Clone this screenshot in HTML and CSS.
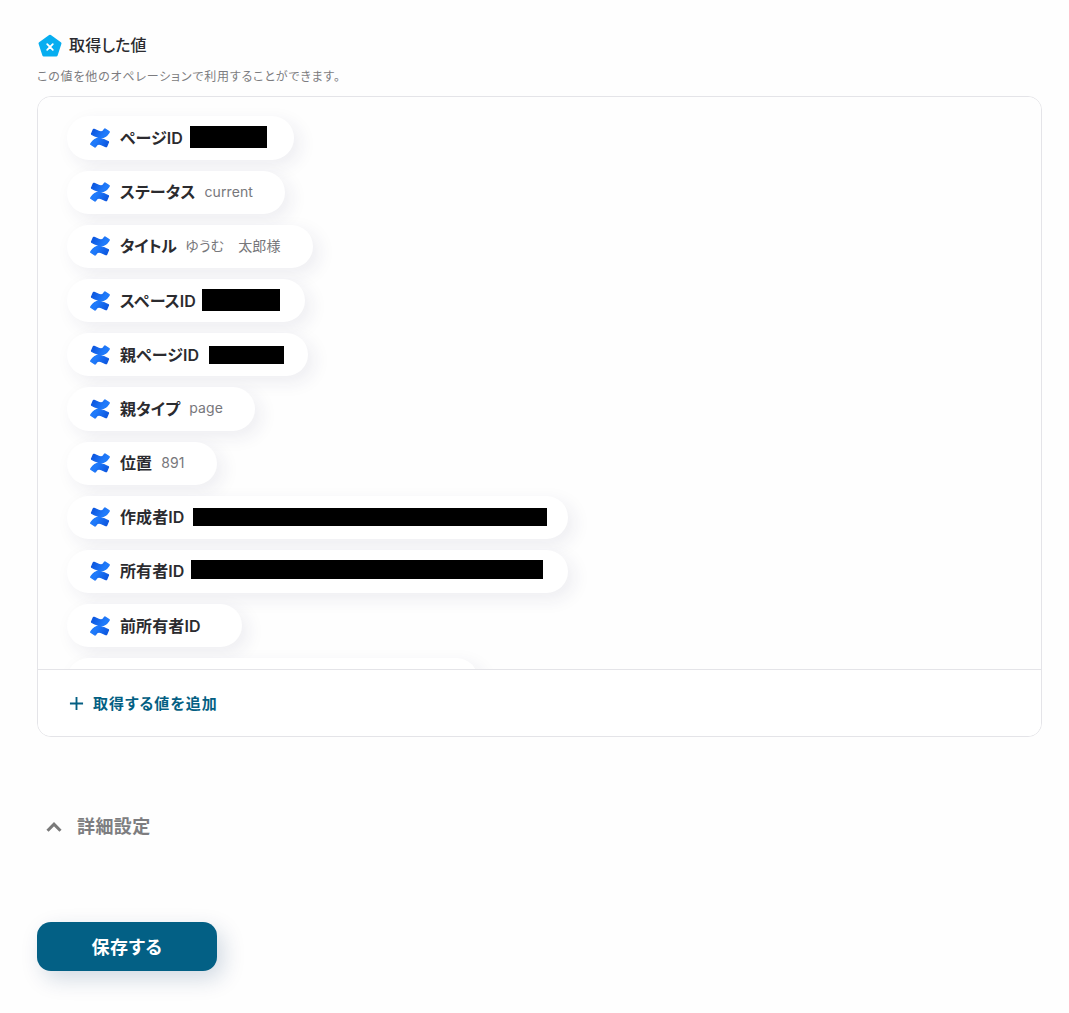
FILE: index.html
```html
<!DOCTYPE html>
<html lang="ja">
<head>
<meta charset="utf-8">
<title>取得した値</title>
<link rel="stylesheet" href="styles.css">
</head>
<body>
<svg class="defs" width="0" height="0" aria-hidden="true">
  <defs>
    <linearGradient id="cg1" gradientUnits="userSpaceOnUse" x1="22" y1="24" x2="8" y2="15"><stop offset="0" stop-color="#0a52dc"/><stop offset="1" stop-color="#1f7afa"/></linearGradient>
    <linearGradient id="cg2" gradientUnits="userSpaceOnUse" x1="2" y1="0" x2="16" y2="9"><stop offset="0" stop-color="#0a52dc"/><stop offset="1" stop-color="#1f7afa"/></linearGradient>
    <symbol id="conf" viewBox="-1 -1 26 26">
      <path fill="url(#cg1)" stroke="url(#cg1)" stroke-width="1.600" d="M.87 18.257c-.248.382-.53.875-.763 1.245a.764.764 0 0 0 .255 1.04l4.965 3.054a.764.764 0 0 0 1.058-.26c.199-.332.454-.763.733-1.221 1.967-3.247 3.945-2.853 7.508-1.146l4.957 2.337a.764.764 0 0 0 1.028-.382l2.364-5.346a.764.764 0 0 0-.382-1 599.851 599.851 0 0 1-4.965-2.361C10.911 10.97 5.6 11.093.87 18.257z"/>
      <path fill="url(#cg2)" stroke="url(#cg2)" stroke-width="1.600" d="M23.131 5.743c.248-.382.53-.875.763-1.245a.764.764 0 0 0-.255-1.04L18.674.404a.764.764 0 0 0-1.058.26c-.199.332-.454.763-.733 1.221-1.967 3.247-3.945 2.853-7.508 1.146L4.418.694a.764.764 0 0 0-1.028.382L1.026 6.422a.764.764 0 0 0 .382 1c1.05.5 3.156 1.49 4.965 2.361 6.712 3.247 12.023 3.124 16.758-4.04z"/>
    </symbol>
  </defs>
</svg>
<main class="page">
  <header class="head">
    <svg class="badge" viewBox="0 0 24 24" aria-hidden="true">
      <path fill="#07aef0" stroke="#07aef0" stroke-width="3" stroke-linejoin="round" d="M12 2.200 22 9.400 18.200 21H5.800L2 9.400z"/>
      <path fill="none" stroke="#fff" stroke-width="1.800" stroke-linecap="round" d="M9.200 10.200 14.800 15.800M14.800 10.200 9.200 15.800"/>
    </svg>
    <h2 class="title">取得した値</h2>
  </header>
  <p class="sub">この値を他のオペレーションで利用することができます。</p>

  <section class="card">
    <div class="list">
      <div class="pill"><svg class="ic"><use href="#conf"/></svg><span class="label">ページID</span><span class="redact r1"></span></div>
      <div class="pill"><svg class="ic"><use href="#conf"/></svg><span class="label">ステータス</span><span class="val">current</span></div>
      <div class="pill"><svg class="ic"><use href="#conf"/></svg><span class="label tight">タイトル</span><span class="val">ゆうむ　太郎様</span></div>
      <div class="pill"><svg class="ic"><use href="#conf"/></svg><span class="label">スペースID</span><span class="redact r2"></span></div>
      <div class="pill"><svg class="ic"><use href="#conf"/></svg><span class="label">親ページID</span><span class="redact r3"></span></div>
      <div class="pill"><svg class="ic"><use href="#conf"/></svg><span class="label">親タイプ</span><span class="val">page</span></div>
      <div class="pill"><svg class="ic"><use href="#conf"/></svg><span class="label">位置</span><span class="val">891</span></div>
      <div class="pill"><svg class="ic"><use href="#conf"/></svg><span class="label">作成者ID</span><span class="redact r4"></span></div>
      <div class="pill"><svg class="ic"><use href="#conf"/></svg><span class="label">所有者ID</span><span class="redact r5"></span></div>
      <div class="pill"><svg class="ic"><use href="#conf"/></svg><span class="label">前所有者ID</span><span class="val"></span></div>
      <div class="pill pill-last"></div>
    </div>
    <div class="foot">
      <svg class="plus" viewBox="0 0 16 16" aria-hidden="true"><path d="M8 1v14M1 8h14" stroke="#045f83" stroke-width="2" fill="none"/></svg>
      <span class="add">取得する値を追加</span>
    </div>
  </section>

  <div class="detail">
    <svg class="chev" viewBox="0 0 16 10" aria-hidden="true"><path d="M1.500 8.800 8 2.200l6.500 6.600" fill="none" stroke="#7a7a7a" stroke-width="3"/></svg>
    <span class="detail-text">詳細設定</span>
  </div>

  <button class="save" type="button">保存する</button>
</main>
</body>
</html>
```

FILE: styles.css
```css
* { box-sizing: border-box; }
html, body { margin: 0; height: 1013px; overflow: hidden; }
body {
  background: #fefefe;
  color: #2b2b2f;
  font-family: Inter, "Noto Sans CJK JP", "Noto Sans", sans-serif;
  font-feature-settings: "palt";
}
.defs { position: absolute; }
.page { padding: 34px 27px 0 37px; }
.head { display: flex; align-items: center; gap: 7px; height: 24px; margin-left: 1px; }
.badge { width: 24px; height: 24px; }
.title { margin: 0; padding-bottom: 2px; font-size: 16px; font-weight: 500; letter-spacing: 0.2px; line-height: 24px; }
.sub { margin: 11px 0 0; font-size: 12px; line-height: 16px; letter-spacing: 0.82px; color: #7c7c80; }
.card {
  margin-top: 11px;
  height: 641px;
  background: #fff;
  border: 1px solid #e4e4e8;
  border-radius: 14px;
  overflow: hidden;
  display: flex;
  flex-direction: column;
}
.list {
  height: 572px;
  overflow: hidden;
  padding: 19.4px 0 0 29px;
  display: flex;
  flex-direction: column;
  align-items: flex-start;
  gap: 11px;
  background: #fefefe;
}
.pill {
  flex: none;
  height: 43.2px;
  display: flex;
  align-items: center;
  padding: 0 32px 0 23px;
  background: #fff;
  border-radius: 22px;
  box-shadow: 6px 6px 18px rgba(40, 40, 90, 0.08);
}
.pill-last { width: 411px; }
.ic { width: 20px; height: 20px; flex: none; margin-right: 10px; }
.label { padding-bottom: 2px; font-size: 16px; font-weight: 600; letter-spacing: 0.1px; white-space: nowrap; color: #2b2b2f; }
.tight { letter-spacing: -0.4px; }
.val { margin-left: 9px; padding-bottom: 2px; font-size: 14px; letter-spacing: 0.1px; color: #77777b; white-space: nowrap; }
.redact { background: #000; display: block; margin: 0 0 1px 6px; height: 22px; }
.r1 { width: 77px; margin-left: 7px; margin-right: -5px; }
.r2 { width: 78px; margin-right: -7px; }
.r3 { width: 75px; margin-left: 10px; margin-right: -8px; margin-bottom: 0; height: 18px; }
.r4 { width: 354px; margin-left: 8px; margin-right: -11px; height: 18px; }
.r5 { width: 352px; margin-right: -7px; margin-bottom: 3px; height: 19px; }
.foot {
  flex: 1;
  border-top: 1px solid #e4e4e8;
  display: flex;
  align-items: center;
  padding-left: 31px;
  gap: 9px;
  background: #fff;
}
.plus { width: 15px; height: 15px; }
.add { padding-bottom: 2px; font-size: 15px; font-weight: 600; letter-spacing: 1px; color: #045f83; }
.detail { display: flex; align-items: center; margin: 77px 0 0 9px; height: 26px; gap: 15px; }
.chev { width: 16px; height: 10px; }
.detail-text { font-size: 18px; font-weight: 600; letter-spacing: 0.4px; color: #7d7d80; line-height: 26px; }
.save {
  display: block;
  margin-top: 82px;
  padding-bottom: 2px;
  width: 180px;
  height: 49px;
  border: 0;
  border-radius: 14px;
  background: #036085;
  color: #fff;
  font: 600 18px Inter, "Noto Sans CJK JP", sans-serif;
  font-feature-settings: "palt";
  letter-spacing: 0.5px;
  box-shadow: 6px 8px 22px rgba(3, 50, 100, 0.18);
}
```
